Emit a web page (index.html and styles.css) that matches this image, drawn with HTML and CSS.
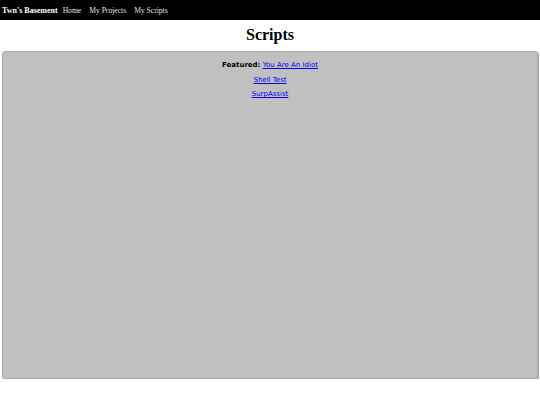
FILE: index.html
```html
<!DOCTYPE html>
<html>
<head>
<meta charset="utf-8">
<link rel="stylesheet" href="styles.css">
</head>
<body>
<nav class="topbar">
  <span class="brand">Twn's Basement</span>
  <a class="navlink" href="#">Home</a>
  <a class="navlink" href="#">My Projects</a>
  <a class="navlink" href="#">My Scripts</a>
</nav>
<h1 class="title">Scripts</h1>
<div class="panel">
  <p class="item"><b>Featured:</b> <a href="#">You Are An Idiot</a></p>
  <p class="item"><a href="#">Shell Test</a></p>
  <p class="item"><a href="#">SurpAssist</a></p>
</div>
</body>
</html>
```
FILE: styles.css
```css
html, body {
  margin: 0;
  padding: 0;
  background: #ffffff;
}
.topbar {
  background: #000000;
  height: 20px;
  display: flex;
  align-items: center;
  gap: 4px;
  padding: 0 2px;
  font-family: "Liberation Serif", serif;
  font-size: 8px;
  color: #ffffff;
}
.brand {
  font-weight: bold;
  margin-right: 1px;
}
.navlink {
  color: #e4e4e4;
  font-size: 7.6px;
  text-decoration: none;
  margin-right: 4px;
}
.title {
  font-family: "Liberation Serif", serif;
  font-size: 16px;
  font-weight: bold;
  text-align: center;
  margin: 5px 0 6px;
  line-height: 20px;
}
.panel {
  margin: 0 2px;
  height: 317px;
  background: #c0c0c0;
  border: 1px solid #aaaaaa;
  border-radius: 3px;
  box-shadow: 1px 1px 1px #a0a0a0;
  padding-top: 9px;
  font-family: "DejaVu Sans", sans-serif;
  font-size: 7px;
  text-align: center;
}
.item {
  margin: 0 0 5px;
  line-height: 9.5px;
}
.item a {
  color: #0000ee;
}
```
